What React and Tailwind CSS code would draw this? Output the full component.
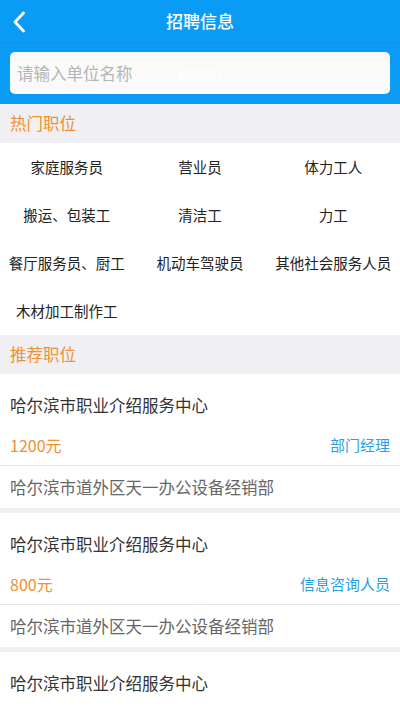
const hotJobs = [
  '家庭服务员', '营业员', '体力工人',
  '搬运、包装工', '清洁工', '力工',
  '餐厅服务员、厨工', '机动车驾驶员', '其他社会服务人员',
  '木材加工制作工',
]

const jobs = [
  {company: '哈尔滨市职业介绍服务中心', salary: '1200元', title: '部门经理', address: '哈尔滨市道外区天一办公设备经销部'},
  {company: '哈尔滨市职业介绍服务中心', salary: '800元', title: '信息咨询人员', address: '哈尔滨市道外区天一办公设备经销部'},
  {company: '哈尔滨市职业介绍服务中心', salary: '1000元', title: '营业员', address: '哈尔滨市道外区天一办公设备经销部'},
]

function SectionHeader({children}) {
  return (
    <div className="flex h-[39px] items-center bg-[#efeff4] px-[10px] text-[16.5px] text-[#f0912d]">
      {children}
    </div>
  )
}

export default function App() {
  return (
    <div className="h-[710px] w-[400px] overflow-hidden bg-[#efeff4]" style={{fontFamily: '"Noto Sans CJK SC", "Liberation Sans", sans-serif'}}>
      <div className="relative flex h-[43px] items-center justify-center border-b border-[#1590e0] bg-[#0a9bf7]">
        <svg className="absolute left-[12px] top-[11px]" width="14" height="22" viewBox="0 0 14 22" fill="none">
          <path d="M11.5 2 L3 11 L11.5 20" stroke="white" strokeWidth="2.8" strokeLinecap="round" strokeLinejoin="round" />
        </svg>
        <span className="text-[17px] font-medium text-white">招聘信息</span>
      </div>

      <div className="bg-[#0a9bf7] px-[10px] pb-[10px] pt-[9px]">
        <div className="relative flex h-[42px] items-center rounded-[5px] bg-[#fafafa] px-[7px]">
          <span className="text-[16.5px] text-[#b5b5b5]">请输入单位名称</span>
          <span className="absolute left-0 right-0 text-center text-[15px] text-white" style={{fontFamily: '"Liberation Sans", sans-serif'}}>Button</span>
        </div>
      </div>

      <SectionHeader>热门职位</SectionHeader>
      <div className="grid grid-cols-3 bg-white">
        {hotJobs.map((job, i) => (
          <div key={i} className="flex h-[48px] items-center justify-center whitespace-nowrap text-[14.5px] text-[#222]">
            {job}
          </div>
        ))}
      </div>

      <SectionHeader>推荐职位</SectionHeader>
      <div className="flex flex-col gap-[5px]">
        {jobs.map((job, i) => (
          <div key={i} className="bg-white">
            <div className="px-[10px] pb-[9px] pt-[20px]">
              <div className="h-[22px] text-[16.5px] leading-[22px] text-[#333]">{job.company}</div>
              <div className="mt-[18px] flex h-[22px] items-center justify-between leading-[22px]">
                <span className="text-[16px] text-[#f0912d]">{job.salary}</span>
                <span className="text-[15px] text-[#2a9fe6]">{job.title}</span>
              </div>
            </div>
            <div className="h-px bg-[#e8e8ec]" />
            <div className="flex h-[42px] items-center px-[10px] text-[16.5px] text-[#666]">
              {job.address}
            </div>
          </div>
        ))}
      </div>
    </div>
  )
}
